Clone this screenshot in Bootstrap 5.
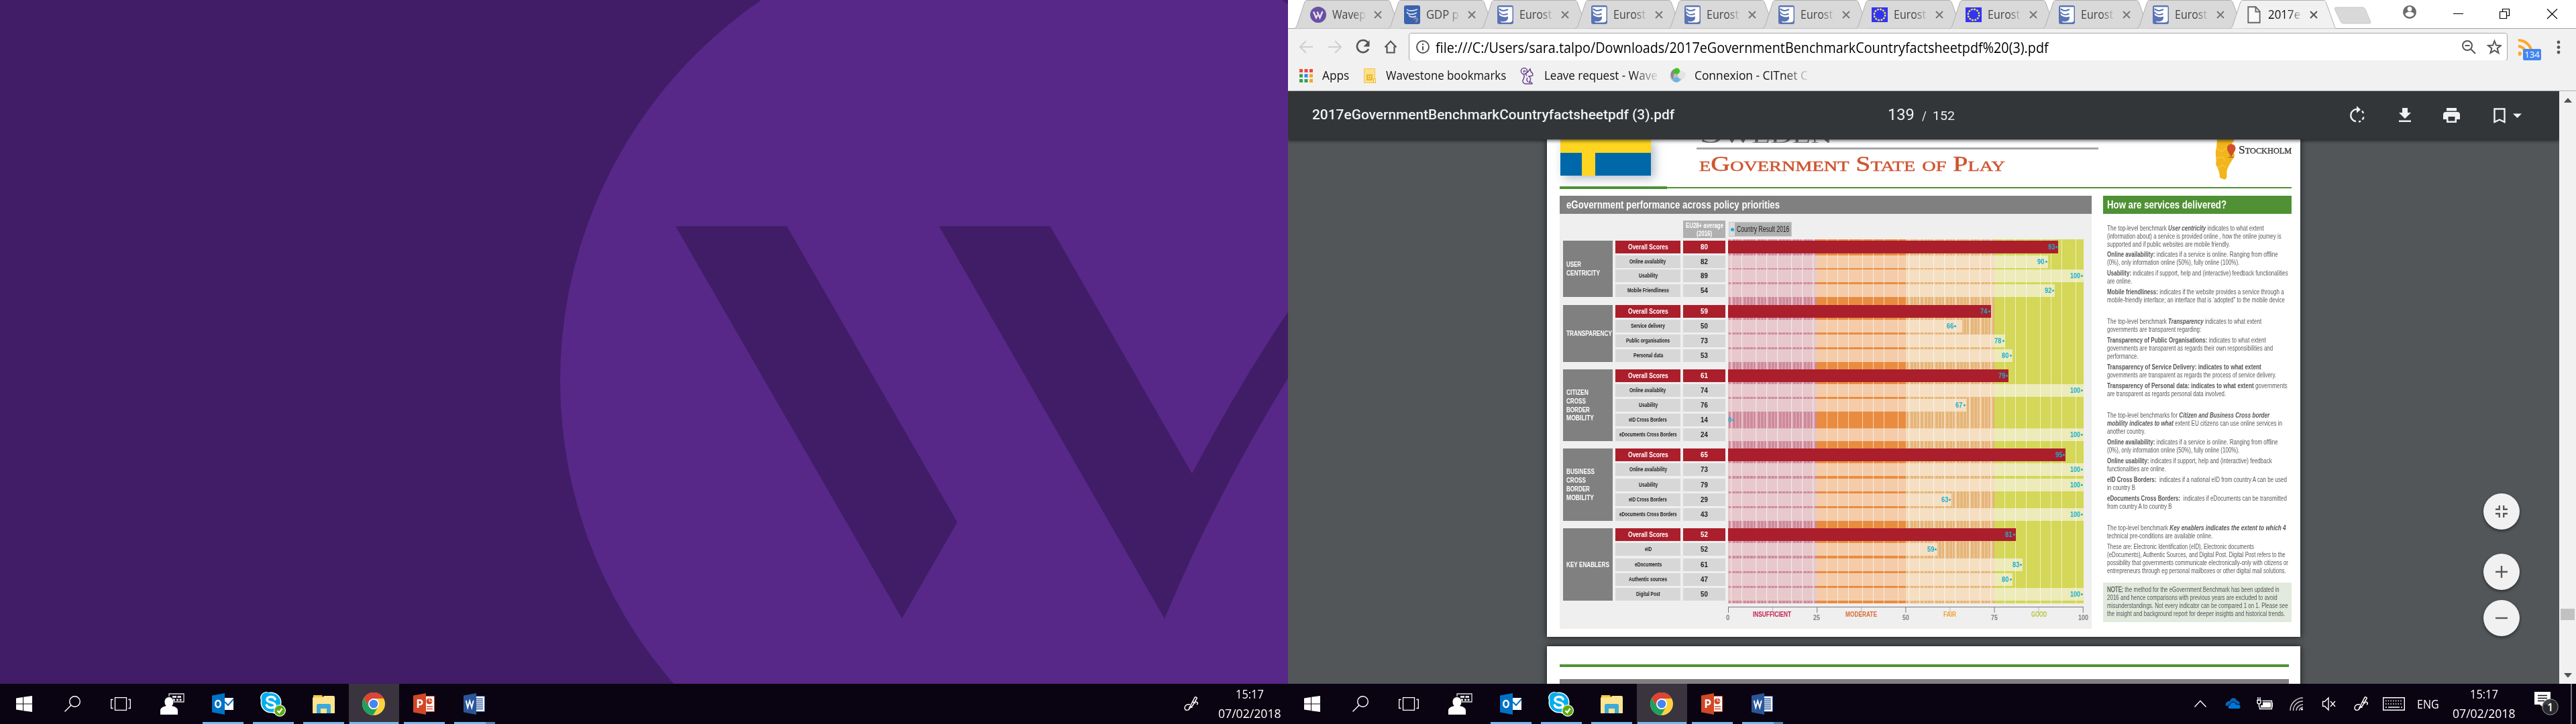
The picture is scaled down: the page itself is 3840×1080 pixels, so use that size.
<!DOCTYPE html>
<html lang="en">
<head>
<meta charset="utf-8">
<title>Desktop</title>
<link href="https://cdn.jsdelivr.net/npm/bootstrap@5.3.0/dist/css/bootstrap.min.css" rel="stylesheet">
<style>
body{width:3840px;height:1080px;overflow:hidden;font-family:"Open Sans","Noto Sans",sans-serif;background:#401d66}
svg{display:block;flex:none}
.screen{width:1920px;height:1080px;flex:none}
.fit{display:block;white-space:nowrap;flex:none}
.fit>span{display:inline-block;transform-origin:0 50%}
/* taskbar */
.taskbar{height:60px;flex:none;background:#0a0412;color:#fff}
.taskbar .tb{width:75px;height:60px;flex:none}
.taskbar .tb-s{width:72px}
.tb.run::after{content:"";position:absolute;left:7px;right:7px;bottom:0;height:3px;background:#76b9ed}
.tb.multi::after{background:linear-gradient(90deg,#76b9ed 47px,#5587ad 47px)}
.tb.on{background:#3a343f}
.tb.on::after{left:1px;right:1px}
.tray{width:48px;height:60px;flex:none}
.clock{width:114px;font-size:18px;line-height:29px}
.notif{width:72px}
/* browser */
.tabs{height:43px;background:#fff;border-bottom:1px solid #a4a4a4;padding-left:9px;flex:none}
.tab-i{width:139.55px;height:43px;flex:none;padding-left:24px}
.tab-bg{position:absolute;left:0;top:0;z-index:0}
.tab-i>*:not(.tab-bg){position:relative;z-index:1}
.tab-t{width:56px;margin-left:9px;font-size:19px;color:#444;overflow:hidden;-webkit-mask-image:linear-gradient(90deg,#000 55%,rgba(0,0,0,.1) 88%)}
.tab-i.active-tab{z-index:3}
.active-tab .tab-t{color:#111}
.omni{height:47px;background:#f1f1f1;flex:none;padding:6px 0 0 0}
.urlbox{width:1638px;height:42px;border:1px solid #a9a9a9;border-radius:4px;background:#fff;color:#000;font-size:22px}
.bm{height:46px;background:#f1f1f1;border-bottom:1px solid #b0b0b0;font-size:19px;color:#111;flex:none}
.fade-e{-webkit-mask-image:linear-gradient(90deg,#000 78%,rgba(0,0,0,.15) 99%)}
.count{left:7px;top:16px;width:27px;height:17px;background:#4285f4;color:#fff;font-size:13px;border-radius:2px;line-height:17px}
.pdfbar{height:72px;background:#323639;color:#f1f1f1;font-family:Roboto,sans-serif;width:1895px;box-shadow:0 2px 5px rgba(0,0,0,.6);z-index:5}
.viewer{width:1895px;background:#525659;padding-left:386px}
.scroll{width:25px;background:#f1f1f1}
.thumb{width:21px;height:17px;background:#c1c1c1}
.fab{width:54px;height:54px;border-radius:50%;background:#f1f1f1;box-shadow:0 2px 4px rgba(0,0,0,.5)}
.fabs{left:1782px;top:528px;width:54px}
/* document */
.sheet{width:1123px;background:#fff;box-shadow:0 0 9px rgba(0,0,0,.75);flex:none}
.serif{font-family:"Liberation Serif",serif;font-variant:small-caps}
.doc{font-family:"Liberation Sans Narrow","Liberation Sans",sans-serif}
.flag{width:135px;height:54px;background:linear-gradient(90deg,transparent 32px,#fed520 32px 52px,transparent 52px),linear-gradient(#fed520 20px,#0068a9 20px);box-shadow:5px 4px 14px rgba(110,130,150,.55)}
.greenrule{height:4px;background:linear-gradient(90deg,#4f9134 160px,transparent 160px),linear-gradient(transparent 1px,#4f9134 1px 3px,transparent 3px);width:1091px}
.ttl{height:27px;font-size:16.5px;font-weight:700;color:#fff;line-height:27px}
.panel-l{width:793px}
.panel-r{width:281px;margin-left:17px}
.perf{height:619px;background:#efefef;padding:10px 0 0 5px}
.eu{width:63px;height:26px;background:#b0b0b0;color:#fff;font-size:10.5px;line-height:12px;font-weight:700;padding-top:1px}
.leg{width:94px;height:22px;background:#b0b0b0;border:1px solid #c8c8c8;font-size:12px;color:#222;line-height:20px}
.leg-d{width:8px;height:20px;background:#dcdcdc}
.dot{width:5px;height:5px;border-radius:50%;background:#1aa9dc}
.cat{width:74px;background:#808080;color:#fff;font-weight:700;font-size:11.5px;line-height:12.8px;padding-left:4.5px}
.lab{width:97px;margin-left:4px}
.val{width:63px;margin-left:4px}
.cell{height:19px;background:#d7d7d7;color:#222;font-weight:700;line-height:19px;flex:none}
.lab .cell{font-size:9.2px}
.val .cell{font-size:11.5px}
.cell.red-c{background:#ab1f2c;color:#fff;font-size:11.5px!important}
.plot{width:530px;height:543px;margin-left:3.5px;padding-top:2px;
 background:
 linear-gradient(90deg,transparent 4.3px,rgba(255,255,255,.62) 4.3px 5.5px,transparent 5.5px 20.3px,rgba(255,255,255,.62) 20.3px 21.5px,transparent 21.5px 41.3px,rgba(255,255,255,.62) 41.3px 42.5px,transparent 42.5px) 0 0/53px 100%,
 repeating-linear-gradient(90deg,rgba(255,255,255,.36) 0 1.3px,transparent 1.3px 5.3px) 0 0/132.5px 100% no-repeat,
 repeating-linear-gradient(90deg,rgba(255,255,255,.36) 0 1.3px,transparent 1.3px 5.3px) 265px 0/132.5px 100% no-repeat,
 linear-gradient(90deg,#cf8b9a 25%,#e98c40 25% 50%,#e6b578 50% 75%,#d4d757 75%)}
.bar-l{height:19px;flex:none;color:#1aafcf;font-weight:700;font-size:11.5px;line-height:19px;
 background:
 linear-gradient(90deg,transparent 4.3px,rgba(255,255,255,.6) 4.3px 5.5px,transparent 5.5px 20.3px,rgba(255,255,255,.6) 20.3px 21.5px,transparent 21.5px 41.3px,rgba(255,255,255,.6) 41.3px 42.5px,transparent 42.5px) 0 0/53px 100%,
 linear-gradient(90deg,#e7c9cc 25%,#f5cca9 25% 50%,#f5dfc2 50% 75%,#ecebb9 75%) 0 0/530px 100%}
.bar-l.red-b{background:#ab1f2c}
.bar-l .dot{width:3px;height:3px;background:#1aafcf}
.axis{width:530px;height:9px;margin:5px 0 0 245.5px;border-top:1.5px solid #777;background:
 linear-gradient(90deg,#777 1.3px,transparent 1.3px) 0 0/132.2px 100%,
 linear-gradient(90deg,#bbb 1.3px,transparent 1.3px) 66px 0/132.2px 4px}
.zones{margin-left:245.5px;width:530px;font-size:11.5px;font-weight:700;line-height:12px;margin-top:-4px}
.ticks{margin-left:245.5px;width:530px;height:12px;font-size:11.5px;font-weight:700;color:#808080;line-height:12px;margin-top:-7px}
.ticks>div{width:0}
.prose{font-size:10.8px;line-height:12px;color:#5a5a5a;padding-left:6px}
.prose p{margin:0 0 4px}
.prose p.sec{margin-bottom:20px}
.prose b{color:#555}
.memo{height:59px;background:#e2eade;padding:4px 0 0 6px;font-size:10.8px;line-height:12px;color:#555;margin-top:12px}
.memo b{font-weight:400;-webkit-text-stroke:.3px}
</style>
<script src="https://cdn.jsdelivr.net/npm/bootstrap@5.3.0/dist/js/bootstrap.bundle.min.js"></script>
</head>
<body class="d-flex m-0">

<svg width="0" height="0" class="position-absolute">
<defs>
<symbol id="i-win" viewBox="0 0 24 24"><path fill="#fff" d="M0 3.4 10 2v9.5H0zM11 1.8 24 0v11.5H11zM0 12.5h10V22L0 20.6zM11 12.5h13V24l-13-1.8z"/></symbol>
<symbol id="i-search" viewBox="0 0 24 24"><g fill="none" stroke="#fff" stroke-width="1.4"><circle cx="15.5" cy="8.5" r="7.8"/><path d="M10 14 .5 23.5"/></g></symbol>
<symbol id="i-task" viewBox="0 0 30 20"><path fill="none" stroke="#fff" stroke-width="1.3" d="M6.500.7h17v18.600h-17zM3.500 3.500H.7v13h2.800M26.500 3.500h2.800v13h-2.800"/></symbol>
<symbol id="i-people" viewBox="0 0 36 32"><path fill="none" stroke="#ddd" stroke-width="1.3" d="M13 5V1h22v12H20"/><path fill="#ddd" d="M18 4h6v3h-6zM25.500 4H31v3h-5.500zM24 8.500h3v3h-3zM28.500 8.500h3v3h-3zM19 8.500h3v3h-3z"/><path fill="#fff" d="M13 6c4 0 6.500 3 6.500 7 0 3-1 5-2.500 6 5 1 9 3 9 7v6H0v-6c0-4 4-6 9-7-1.500-1-2.500-3-2.500-6 0-4 2.500-7 6.500-7z"/></symbol>
<symbol id="i-outlook" viewBox="0 0 32 32"><path fill="#fff" d="M18 7h14v18H18z"/><path fill="none" stroke="#0072c6" stroke-width="2" d="m19 13 5 5 8-9"/><path fill="#0072c6" d="M0 3.500 19 0v32L0 28.500z"/><ellipse cx="9" cy="16" rx="3.800" ry="5" fill="none" stroke="#fff" stroke-width="2.600"/></symbol>
<symbol id="i-skype" viewBox="0 0 38 38"><circle cx="9" cy="10" r="9" fill="#fff"/><circle cx="23" cy="25" r="9" fill="#fff"/><circle cx="16" cy="17" r="15.500" fill="#fff"/><circle cx="9.500" cy="10" r="8" fill="#00aff0"/><circle cx="23" cy="24" r="8" fill="#00aff0"/><circle cx="16" cy="17" r="14" fill="#00aff0"/><path fill="none" stroke="#fff" stroke-width="3.600" stroke-linecap="round" d="M22 12c-2-5-12-4.500-12 .5 0 5.500 12 3 12 8.500 0 5-11 5-12.500 0"/><circle cx="29" cy="29" r="9" fill="#fff"/><circle cx="29" cy="29" r="7.800" fill="#5fab10"/><path fill="none" stroke="#fff" stroke-width="2.200" d="m25.500 29 2.700 3 4.300-6"/></symbol>
<symbol id="i-folder" viewBox="0 0 33 27"><path fill="#f6c945" d="M1 0h13l2 4H1z"/><path fill="#ffe48f" d="M0 3.500h15L17 1h14c1 0 2 1 2 2v24H0z"/><path fill="#3fa9dc" d="M6 27V15c0-1 1-2 2-2h17c1 0 2 1 2 2v12h-6v-7H12v7z"/></symbol>
<symbol id="i-chrome" viewBox="0 0 34 34"><circle cx="17" cy="17" r="17" fill="#fdd23e"/><path fill="#db4437" d="M17 17 2.300 8.500A17 17 0 0 1 32 9H17z"/><path fill="#db4437" d="M2.300 8.500 10 21l7-12h15A17 17 0 0 0 2.300 8.500z"/><path fill="#1da160" d="M2.300 8.500A17 17 0 0 0 16 34l8-13a8 8 0 0 1-14 0z"/><circle cx="17" cy="17" r="8" fill="#fff"/><circle cx="17" cy="17" r="6.300" fill="#4486f4"/></symbol>
<symbol id="i-ppt" viewBox="0 0 32 32"><path fill="#fff" stroke="#d24726" d="M18 4.500h13.500v23H18z"/><circle cx="24" cy="12" r="4.500" fill="#d24726"/><path d="M24 12V7.500M24 12h4.500" stroke="#fff"/><path stroke="#d24726" stroke-width="1.600" d="M20 20h9M20 23.500h9"/><path fill="#d24726" d="M0 3.500 19 0v32L0 28.500z"/><path fill="none" stroke="#fff" stroke-width="2.600" d="M7 22V10.500h3a3 3 0 0 1 0 6.500H7"/></symbol>
<symbol id="i-word" viewBox="0 0 32 32"><path fill="#fff" stroke="#2a5699" d="M18 4.500h13.500v23H18z"/><path stroke="#2a5699" stroke-width="1.500" d="M19 8.500h10M19 11.500h10M19 14.500h10M19 17.500h10M19 20.500h10M19 23.500h10"/><path fill="#2a5699" d="M0 3.500 19 0v32L0 28.500z"/><path fill="none" stroke="#fff" stroke-width="1.900" d="m3.800 11 2.400 10.500L9.200 11.500l3 10L14.800 11"/></symbol>
<symbol id="i-pen" viewBox="0 0 22 22"><g fill="none" stroke="#fff" stroke-width="1.500"><path d="m10 13 6-11.500c1-1.500 4 0 3 1.500L12.500 14 9 17zM13 8l4 2"/><path d="M9 12c-4-1-8 1-8 5 0 5 7 4 7 0 0-3 4-2 4 0M17 8c4 0 4 3 2 4"/></g></symbol>
<symbol id="i-doc" viewBox="0 0 16 21"><path fill="#f9f9f9" stroke="#666" stroke-width="1.500" d="M1 1h9l5 5.500V20H1z"/><path fill="none" stroke="#666" stroke-width="1.500" d="M10 1v6h5"/></symbol>
<symbol id="i-w" viewBox="0 0 24 24"><circle cx="12" cy="12" r="12" fill="#6b4fa3"/><path fill="none" stroke="#e9e2f2" stroke-width="2.400" d="m5 7.500 4 9 2-4M10.500 7.500l4 9 4-9.500"/></symbol>
<symbol id="i-es" viewBox="0 0 24 28"><rect width="24" height="28" rx="3" fill="#5a74b4"/><path fill="#fff" d="M2 2.500h20.500V22c0 2.500-2 3.500-5 3.500H8c-3 0-3-2-3-2 3 1 7 1 9-1 2-1 2-4 2-6-4 2-9 1-13-2z"/><path fill="none" stroke="#5a74b4" stroke-width="2" d="M3 5c3 3.500 8 3.500 13 1M2.500 10c3 4 8 5 13 2.500M3 16c3 4 7 4.500 12 2.500"/></symbol>
<symbol id="i-gdp" viewBox="0 0 24 28"><rect width="24" height="28" rx="3" fill="#3c62ae"/><path fill="none" stroke="#dfe7f5" stroke-width="1.700" d="M4 6c3 3 8 3 16 0M4 10c3 4.500 8 4.500 15 1M7 15c3 3 7 3 11 1"/><path fill="none" stroke="#8c94a8" stroke-width="2" d="M15 21c1-3 6-2 5 1l-2 2v1.500"/></symbol>
<symbol id="i-eu" viewBox="0 0 24 22"><rect width="24" height="22" fill="#3333f5"/><circle cx="12" cy="11" r="8.200" fill="none" stroke="#f5f13a" stroke-width="2.400" stroke-dasharray="2.700 1.593"/></symbol>
</defs>
</svg>

<!-- left monitor -->
<div class="screen d-flex flex-column">
  <svg width="1920" height="1020" viewBox="0 0 1920 1020">
    <rect width="1920" height="1020" fill="#401d66"/>
    <circle cx="1523" cy="568" r="688" fill="#572888"/>
    <path fill="#401d66" d="M1007 337.500h166L1427 779l-82.500 143.500zM1400 337.500h165.500L1777 706.500Q1846 575 1920 465v99Q1812 740 1736 923z"/>
  </svg>
  <div class="taskbar d-flex" data-bar="left"></div>
</div>

<!-- right monitor -->
<div class="screen d-flex flex-column">
  <div class="tabs d-flex position-relative">
    <div id="tabs" class="d-flex flex-none"></div>
    <svg width="360" height="42" viewBox="0 0 360 42" style="margin-left:7px">
      <path fill="#d9d9d9" stroke="#c8c8c8" d="M11 11h39c3 0 4 1 5 3l8 19c0 2-1 2-3 2H23c-3 0-4-1-5-3L9.500 14c-.5-2 0-3 1.500-3z"/>
      <circle cx="121" cy="18" r="10" fill="#6b6b6b"/><circle cx="121" cy="13.500" r="3.400" fill="#fff"/><path fill="#fff" d="M114.500 21.500c0-5 13-5 13 0-2.500 5-10.500 5-13 0z"/>
      <path fill="none" stroke="#000" stroke-width="1.200" d="M186 20.500h15M255.500 17.500h10v10h-10zM259.500 17v-3.500h10v10H266M326 13.500l15 14.500M341 13.500 326 28"/>
    </svg>
  </div>
  <div class="omni d-flex">
    <svg width="180" height="41" viewBox="0 0 180 41">
      <g fill="none" stroke="#cfcfcf" stroke-width="2"><path d="M37 21H18M27 12l-9 9 9 9M60 21h19M70 12l9 9-9 9"/></g>
      <path fill="none" stroke="#555" stroke-width="2.600" d="M119 14.500A9 9 0 1 0 120 24"/><path fill="#555" d="M121.500 11v9.500h-9z"/>
      <path fill="none" stroke="#555" stroke-width="2.200" d="m144.500 21.500 8.500-9 8.500 9M147.500 20v9.500h11V20"/>
    </svg>
    <div class="urlbox d-flex align-items-center">
      <svg width="39" height="24" viewBox="0 0 39 24"><circle cx="20" cy="12" r="9" fill="none" stroke="#555" stroke-width="2"/><path stroke="#555" stroke-width="2.200" d="M20 11v6M20 7v2.200"/></svg>
      <div class="fit" data-w="914"><span>file:///C:/Users/sara.talpo/Downloads/2017eGovernmentBenchmarkCountryfactsheetpdf%20(3).pdf</span></div>
      <svg class="ms-auto me-2" width="62" height="26" viewBox="0 0 62 26"><g fill="none" stroke="#555" stroke-width="2"><circle cx="11" cy="11" r="7"/><path d="m16 16 7 7M7.500 11h7"/><path d="m51.500 4 2.500 6.500 7 .4-5.400 4.300 1.900 6.800-6-3.800-6 3.800 1.900-6.800L42 10.900l7-.4z"/></g></svg>
    </div>
    <div class="position-relative ms-3 mt-2" style="width:60px">
      <svg width="66" height="26" viewBox="0 0 66 26"><g fill="none" stroke="#ffa726" stroke-width="4"><path d="M0 3c11 0 20 9 20 20M0 12c6 0 11 5 11 11"/></g><circle cx="2" cy="23" r="3" fill="#ffa726"/><g fill="#555"><circle cx="60" cy="6" r="2.400"/><circle cx="60" cy="13.500" r="2.400"/><circle cx="60" cy="21" r="2.400"/></g></svg>
      <div class="count position-absolute text-center">134</div>
    </div>
  </div>
  <div class="bm d-flex align-items-center">
    <svg width="51" height="22" viewBox="0 0 51 22"><path fill="#f2453d" d="M17 1h5v5h-5zM24.500 1h5v5h-5zM32 1h5v5h-5z"/><path fill="#34a050" d="M17 8.500h5v5h-5zM17 16h5v5h-5zM24.500 16h5v5h-5z"/><path fill="#2b84f3" d="M24.500 8.500h5v5h-5z"/><path fill="#f5a623" d="M32 8.500h5v5h-5zM32 16h5v5h-5z"/></svg>
    <div class="fit" data-w="40"><span>Apps</span></div>
    <svg width="55" height="24" viewBox="0 0 55 24"><path fill="#ffe08a" stroke="#f0c64a" d="M22.500 1.500h16v21h-16z"/><path fill="#e6b832" d="M26 10h9v9h-9z"/><path fill="#ffe08a" d="M28 12h2v2h-2zM31 12h2v2h-2zM28 15.500h2v1.500h-2zM31 15.500h2v1.500h-2z"/><path fill="#fff0b8" stroke="#e6b832" d="M36.500 16.500h3v6h-3z"/></svg>
    <div class="fit" data-w="179"><span>Wavestone bookmarks</span></div>
    <svg width="57" height="26" viewBox="0 0 57 26"><g fill="none" stroke="#6b4691" stroke-width="1.500"><circle cx="27" cy="6" r="4.600"/><path d="M29 7c-1-3-4-1-2 1M26 11c4 4-2 7-1 11 1 2 2 3 4 3h10c0-2-2-3-5-2 4-4 3-7 0-9l5-1c2-2 0-5-2-6l-1-4-4 5c-3 0-3 3-1 5M32 16c-2 3-1 5 1 6"/></g></svg>
    <div class="fit fade-e" data-w="169"><span>Leave request - Wave</span></div>
    <svg width="55" height="26" viewBox="0 0 55 26"><circle cx="28" cy="13" r="9.500" fill="#b9bec0"/><circle cx="36" cy="12" r="6" fill="#e3e5e5"/><path fill="#888" d="M20 8c2-5 6-6 9-5l-5 8-1 8c-3-3-4-7-3-11z"/><circle cx="28.500" cy="6" r="4.500" fill="#3ec41e"/><ellipse cx="28" cy="19" rx="5" ry="3.800" fill="#6bb4e4"/></svg>
    <div class="fit fade-e" data-w="169"><span>Connexion - CITnet C</span></div>
  </div>

  <div class="d-flex flex-fill overflow-hidden position-relative">
    <div class="d-flex flex-column position-relative overflow-hidden">
      <div class="pdfbar d-flex align-items-center position-relative flex-shrink-0" style="padding-left:36px">
        <div class="fit fw-medium" style="font-size:21px" data-w="540"><span>2017eGovernmentBenchmarkCountryfactsheetpdf (3).pdf</span></div>
        <div class="d-flex align-items-baseline" style="margin-left:318px">
          <div class="fit" style="font-size:23px" data-w="40"><span>139</span></div>
          <div class="fit" style="font-size:19px;margin-left:11px" data-w="7"><span>/</span></div>
          <div class="fit" style="font-size:19px;margin-left:9px" data-w="33"><span>152</span></div>
        </div>
        <svg class="ms-auto" width="324" height="40" viewBox="0 0 324 40">
          <g fill="none" stroke="#f1f1f1" stroke-width="2.400"><path d="M24 11a9 9 0 0 0-3 18.300M25 29.600a9 9 0 0 0 3-1M30.500 26.500a9 9 0 0 0 2-4M32 17a9 9 0 0 0-2-3.500"/></g><path fill="#f1f1f1" d="m22 6 6 5.500-6 5z"/>
          <path fill="#f1f1f1" d="M90 9h8v7h5l-9 9-9-9h5zM85 27.500h18V30H85zM156 9h15v4.500h-15zM155 15h17c3 0 4 2 4 4v7h-5v5h-15v-5h-5v-7c0-2 1-4 4-4z"/><path fill="#323639" d="M158.500 22h10v6.500h-10z"/>
          <path fill="none" stroke="#f1f1f1" stroke-width="2.400" d="M227.500 10.500h15V30l-7.500-3.500-7.500 3.500z"/><path fill="#f1f1f1" d="M255 17.500h13l-6.500 6.500z"/>
        </svg>
      </div>
      <div class="viewer flex-fill d-flex flex-column">
        <div class="sheet doc" style="height:742px">
          <div class="d-flex" style="height:70px;padding-left:20px">
            <div class="flag"></div>
            <div style="margin-left:68px;width:599px">
              <div class="serif d-flex align-items-end" style="height:7px;color:#777;font-size:40px;line-height:30px;padding-left:4px"><div class="fit" data-w="198"><span>Sweden</span></div></div>
              <div style="height:3px;margin-top:5px;background:#a5a7aa"></div>
              <div class="serif" style="color:#cf5530;font-size:31px;line-height:38px;padding:3px 0 0 4px;-webkit-text-stroke:.5px"><div class="fit" data-w="456"><span>eGovernment State of Play</span></div></div>
            </div>
            <svg width="115" height="62" viewBox="0 0 115 62" style="margin-left:172px">
              <path fill="#f2b61c" d="M5 0h26c-4 7-7 11-8 15 6 3 10 8 7 12-5 7-8 12-10 18-2 7 2 12-4 15l-7-3c0-8-3-14-6-20 2-8-2-16 1-24z"/>
              <path fill="none" stroke="#f7cf62" d="m5 14 8 4 5-6M4 28l9-2 4 6M6 42l8-4 4 4"/>
              <path fill="#d1502a" d="M26 26c-4-6-6-9-6-13 0-8 12.500-8 12.500 0 0 4-3 7-6.500 13z"/><path stroke="#8a5a14" d="M22 26.500h8"/>
            </svg>
            <div class="serif" style="margin-left:-78px;margin-top:5px;font-size:17px;line-height:22px;color:#333;-webkit-text-stroke:.3px"><div class="fit" data-w="79"><span>Stockholm</span></div></div>
          </div>
          <div class="greenrule" style="margin-left:19px"></div>
          <div class="d-flex" style="margin:10px 0 0 19px">
            <div class="panel-l">
              <div class="ttl" style="background:#808080;padding-left:10px"><div class="fit" data-w="318"><span>eGovernment performance across policy priorities</span></div></div>
              <div class="perf">
                <div class="d-flex align-items-start">
                  <div class="eu" style="margin-left:179px"><div class="fit mx-auto" data-w="56"><span>EU28+ average</span></div><div class="fit mx-auto" data-w="23"><span>(2016)</span></div></div>
                  <div class="leg d-flex" style="margin:2px 0 0 5px"><div class="leg-d d-flex align-items-center justify-content-center"><div class="dot"></div></div><div class="fit" style="margin-left:3px" data-w="78"><span>Country Result 2016</span></div></div>
                </div>
                <div class="d-flex" style="margin-top:2px">
                  <div id="groups" style="padding-top:2px"></div>
                  <div id="plot" class="plot"></div>
                </div>
                <div class="axis"></div>
                <div class="zones d-flex">
                  <div class="w-25" style="color:#c4224e"><div class="fit mx-auto" data-w="57"><span>INSUFFICIENT</span></div></div>
                  <div class="w-25" style="color:#db6b35"><div class="fit mx-auto" data-w="47"><span>MODERATE</span></div></div>
                  <div class="w-25" style="color:#f2a330"><div class="fit mx-auto" data-w="19"><span>FAIR</span></div></div>
                  <div class="w-25" style="color:#b9c63a"><div class="fit mx-auto" data-w="23"><span>GOOD</span></div></div>
                </div>
                <div class="ticks d-flex justify-content-between">
                  <div class="d-flex justify-content-center"><div class="fit" data-w="5"><span>0</span></div></div>
                  <div class="d-flex justify-content-center"><div class="fit" data-w="10"><span>25</span></div></div>
                  <div class="d-flex justify-content-center"><div class="fit" data-w="10"><span>50</span></div></div>
                  <div class="d-flex justify-content-center"><div class="fit" data-w="10"><span>75</span></div></div>
                  <div class="d-flex justify-content-center"><div class="fit" data-w="15"><span>100</span></div></div>
                </div>
              </div>
            </div>
            <div class="panel-r">
              <div class="ttl" style="background:#4f9134;padding-left:6px"><div class="fit" data-w="178"><span>How are services delivered?</span></div></div>
              <div class="prose" style="padding-top:15px">
                <p style="margin-bottom:3px"><span class="fit" data-w="234"><span>The top-level benchmark <b><i>User centricity</i></b> indicates to what extent</span></span><span class="fit" data-w="260"><span>(information about) a service is provided online , how the online journey is</span></span><span class="fit" data-w="183"><span>supported and if public websites are mobile friendly.</span></span></p>
                <p><span class="fit" data-w="255"><span><b>Online availability:</b> indicates if a service is online. Ranging from offline</span></span><span class="fit" data-w="197"><span>(0%), only information online (50%), fully online (100%).</span></span></p>
                <p><span class="fit" data-w="270"><span><b>Usability:</b> indicates if support, help and (interactive) feedback functionalities</span></span><span class="fit" data-w="37"><span>are online.</span></span></p>
                <p class="sec"><span class="fit" data-w="264"><span><b>Mobile friendliness:</b> indicates if the website provides a service through a</span></span><span class="fit" data-w="265"><span>mobile-friendly interface; an interface that is ‘adopted” to the mobile device</span></span></p>
                <p><span class="fit" data-w="230"><span>The top-level benchmark <b><i>Transparency</i></b> indicates to what extent</span></span><span class="fit" data-w="140"><span>governments are transparent regarding:</span></span></p>
                <p><span class="fit" data-w="237"><span><b>Transparency of Public Organisations:</b> indicates to what extent</span></span><span class="fit" data-w="247"><span>governments are transparent as regards their own responsibilities and</span></span><span class="fit" data-w="47"><span>performance.</span></span></p>
                <p><span class="fit" data-w="230"><span><b>Transparency of Service Delivery: indicates to what extent</b></span></span><span class="fit" data-w="252"><span>governments are transparent as regards the process of service delivery.</span></span></p>
                <p class="sec"><span class="fit" data-w="269"><span><b>Transparency of Personal data: indicates to what extent</b> governments</span></span><span class="fit" data-w="177"><span>are transparent as regards personal data involved.</span></span></p>
                <p><span class="fit" data-w="242"><span>The top-level benchmarks for <b><i>Citizen and Business Cross border</i></b></span></span><span class="fit" data-w="261"><span><b><i>mobility indicates to what</i></b> extent EU citizens can use online services in</span></span><span class="fit" data-w="57"><span>another country.</span></span></p>
                <p><span class="fit" data-w="255"><span><b>Online availability:</b> indicates if a service is online. Ranging from offline</span></span><span class="fit" data-w="197"><span>(0%), only information online (50%), fully online (100%).</span></span></p>
                <p><span class="fit" data-w="246"><span><b>Online usability:</b> indicates if support, help and (interactive) feedback</span></span><span class="fit" data-w="88"><span>functionalities are online.</span></span></p>
                <p><span class="fit" data-w="268"><span><b>eID Cross Borders:</b>&nbsp; indicates if a national eID from country A can be used</span></span><span class="fit" data-w="42"><span>in country B</span></span></p>
                <p class="sec"><span class="fit" data-w="268"><span><b>eDocuments Cross Borders:</b>&nbsp; indicates if eDocuments can be transmitted</span></span><span class="fit" data-w="97"><span>from country A to country B</span></span></p>
                <p><span class="fit" data-w="267"><span>The top-level benchmark <b><i>Key enablers indicates the extent to which 4</i></b></span></span><span class="fit" data-w="157"><span>technical pre-conditions are available online.</span></span></p>
                <p><span class="fit" data-w="219"><span>These are: Electronic Identification (eID), Electronic documents</span></span><span class="fit" data-w="266"><span>(eDocuments), Authentic Sources, and Digital Post. Digital Post refers to the</span></span><span class="fit" data-w="270"><span>possibility that governments communicate electronically-only with citizens or</span></span><span class="fit" data-w="267"><span>entrepreneurs through eg personal mailboxes or other digital mail solutions.</span></span></p>
              </div>
              <div class="memo"><span class="fit" data-w="257"><span><b>NOTE:</b> the method for the eGovernment Benchmark has been updated in</span></span><span class="fit" data-w="254"><span>2016 and hence comparisons with previous years are excluded to avoid</span></span><span class="fit" data-w="270"><span>misunderstandings. Not every indicator can be compared 1 on 1. Please see</span></span><span class="fit" data-w="265"><span>the insight and background report for deeper insights and historical trends.</span></span></div>
            </div>
          </div>
        </div>
        <div class="sheet" style="height:100px;margin-top:14px;padding:27px 17px 0 19px">
          <div style="height:4px;background:#4f9134"></div>
          <div style="height:40px;margin-top:18px;background:#808080"></div>
        </div>
      </div>
    </div>
    <div class="fabs position-absolute" style="top:600px">
      <div class="fab d-flex align-items-center justify-content-center"><svg width="18" height="18" viewBox="0 0 18 18"><path fill="none" stroke="#5a5a5a" stroke-width="2.400" d="M0 5.800h5.800V0M12.200 0v5.800H18M0 12.200h5.800V18M18 12.200h-5.800V18"/></svg></div>
      <div class="fab d-flex align-items-center justify-content-center" style="margin-top:36px"><svg width="18" height="18" viewBox="0 0 18 18"><path stroke="#5a5a5a" stroke-width="2.400" d="M0 9h18M9 0v18"/></svg></div>
      <div class="fab d-flex align-items-center justify-content-center" style="margin-top:15px"><svg width="18" height="18" viewBox="0 0 18 18"><path stroke="#5a5a5a" stroke-width="2.400" d="M0 9h18"/></svg></div>
    </div>
    <div class="scroll d-flex flex-column align-items-center">
      <svg width="12" height="7" viewBox="0 0 12 7" style="margin-top:10px"><path fill="#505050" d="M0 7 6 0l6 7z"/></svg>
      <div class="thumb" style="margin-top:755px"></div>
      <svg width="12" height="7" viewBox="0 0 12 7" style="margin-top:79px"><path fill="#505050" d="M0 0h12L6 7z"/></svg>
    </div>
  </div>
  <div class="taskbar d-flex" data-bar="right"></div>
</div>

<script>
const use=(id,w,h,x='')=>`<svg width="${w}" height="${h}" ${x}><use href="#i-${id}"/></svg>`;
const mid='d-flex align-items-center justify-content-center position-relative';
const fit=(t,w,c='')=>`<div class="fit ${c}" data-w="${w}"><span>${t}</span></div>`;

// browser tabs
const tabs=[['w','Wavep',50],['gdp','GDP p',49],['es'],['es'],['es'],['es'],['eu'],['eu'],['es'],['es'],['doc','2017e',48]];
document.getElementById('tabs').innerHTML=tabs.map(([ic,t,w],i)=>{
  const a=i===10,h=ic==='eu'?22:ic==='doc'||ic==='w'?26:28;
  return `<div class="tab-i d-flex align-items-center position-relative ${a?'active-tab':''}">
  <svg class="tab-bg" width="160" height="43"><path d="M0 42.500C3 42 4 39 5 36L15.500 4C16.500 1.500 17.500.5 20 .5H139c2.500 0 3.500 1 4.500 3.500L155 36c1 4 2 6 4 6.500" fill="${a?'#f1f1f1':'#d9d9d9'}" stroke="#b0b0b0"/></svg>
  ${use(ic,24,h)}<div class="tab-t">${fit(t||'Eurost',w||48)}</div>
  <svg width="12" height="12" style="margin-left:6px"><path d="m1 1 10 10M11 1 1 11" stroke="${a?'#555':'#777'}" stroke-width="2"/></svg></div>`}).join('');

// performance chart
const data=[
 [84,0,[['USER',22],['CENTRICITY',50]],[['Overall Scores',60,80,93],['Online availablity',54.5,82,90],['Usability',28,89,100],['Mobile Friendliness',62,54,92]]],
 [85,12,[['TRANSPARENCY',68]],[['Overall Scores',60,59,74],['Service delivery',51,50,66],['Public organisations',65,73,78],['Personal data',44,53,80]]],
 [107,11,[['CITIZEN',33],['CROSS',29],['BORDER',35],['MOBILITY',41]],[['Overall Scores',60,61,79],['Online availablity',54.5,74,100],['Usability',28,76,67],['eID Cross Borders',57,14,0],['eDocuments Cross Borders',86,24,100]]],
 [108,11,[['BUSINESS',42],['CROSS',29],['BORDER',35],['MOBILITY',41]],[['Overall Scores',60,65,95],['Online availability',56,73,100],['Usability',28,79,100],['eID Cross Borders',57,29,63],['eDocuments Cross Borders',86,43,100]]],
 [108,11,[['KEY ENABLERS',64]],[['Overall Scores',60,52,81],['eID',10,52,59],['eDocuments',40,61,83],['Authentic sources',57,47,80],['Digital Post',36,50,100]]]];
const col='d-flex flex-column justify-content-between';
document.getElementById('groups').innerHTML=data.map(([h,m,cat,rows])=>`<div class="d-flex" style="height:${h}px;margin-top:${m}px">
 <div class="cat d-flex flex-column justify-content-center">${cat.map(c=>fit(...c)).join('')}</div>
 <div class="lab ${col}">${rows.map((r,i)=>`<div class="cell d-flex justify-content-center ${i?'':'red-c'}">${fit(r[0],r[1])}</div>`).join('')}</div>
 <div class="val ${col}">${rows.map((r,i)=>`<div class="cell d-flex justify-content-center ${i?'':'red-c'}">${fit(r[2],11)}</div>`).join('')}</div></div>`).join('');
document.getElementById('plot').innerHTML=data.map(([h,m,c,rows])=>`<div class="${col}" style="height:${h}px;margin-top:${m}px">${rows.map((r,i)=>{
 const start=r[3]===0, back=r[3]===66?9:1;
 return `<div class="bar-l d-flex align-items-center ${start?'justify-content-start':'justify-content-end'} ${i?'':'red-b'}" style="width:${r[3]*5.3}px">${fit(r[3],r[3]===100?15:start?5:10.5)}<div class="dot flex-shrink-0" style="margin:0 ${back}px 0 1px"></div></div>`}).join('')}</div>`).join('');

// taskbars
const apps=[['outlook',32,32,'run'],['skype',38,38,'run'],['folder',33,27,'run'],['chrome',34,34,'run on'],['ppt',32,32,'run'],['word',32,32,'run multi']];
const left=[['win',24,24],['search',24,24],['task',30,20]].map(a=>`<div class="tb tb-s ${mid}">${use(a[0],a[1],a[2])}</div>`).join('')
 +`<div class="tb ${mid}" style="margin-left:3.500px">${use('people',36,32)}</div>`
 +apps.map(a=>`<div class="tb ${mid} ${a[3]}">${use(a[0],a[1],a[2])}</div>`).join('');
const clock=`<div class="clock d-flex flex-column align-items-center justify-content-center">${fit('15:17',42)}${fit('07/02/2018',94)}</div>`;
const ic=(s,w=24,h=24)=>`<div class="tray ${mid}"><svg width="${w}" height="${h}" viewBox="0 0 ${w} ${h}" fill="none" stroke="#fff" stroke-width="1.4">${s}</svg></div>`;
const pen=`<div class="tray ${mid}">${use('pen',22,22)}</div>`;
document.querySelector('[data-bar=left]').innerHTML=left+`<div class="ms-auto d-flex">${pen}<div style="width:6px"></div>${clock}</div>`;
document.querySelector('[data-bar=right]').innerHTML=left+`<div class="ms-auto d-flex align-items-center">`
 +ic('<path d="m3.500 16.500 8.500-9 8.500 9"/>')
 +ic('<path stroke="none" fill="#0a64b4" d="M2 15C0 9 7 7 8 8c2-7 10-5 10-1 4 0 6 4 4 7z"/><path stroke="#0a0412" stroke-width="1" fill="#0078d7" d="M7 19.500c-3-1-2-6 1-6 1-6 9-5 9-1 5-1 7 2 7 4s-1 3-3 3z"/>')
 +ic('<path fill="#fff" stroke="none" d="M9 9.500h12v8H6V14h3z"/><path d="M8.500 7.500h14v12h-18v-3M22.500 11h1.500v5h-1.500M1 6.500h5v3a2.500 2.500 0 0 1-5 0zM2 6V2M5 6V2M3.500 12v5"/>')
 +ic('<g stroke="#ccc"><path d="M2 22C2 11 11 3 21 3M6.500 22C6.500 14 13 8 21 8M11 22c0-5 5-9 10-9M15.500 22c0-3 3-5 5.500-5"/></g><circle cx="19.500" cy="20" r="1.600" fill="#fff" stroke="none"/>')
 +ic('<path d="M2.500 8.500h3L11 3v18l-5.500-5.500h-3zM14 8l7 8M21 8l-7 8"/>')
 +pen
 +ic('<path d="M.7.700h31.600v18.600H.7z"/><path stroke-dasharray="1.500 2.200" d="M4 5.500h25M4 10h25"/><path stroke-dasharray="2 2 17 2" d="M4 15h25"/>',33,20)
 +`<div class="d-flex justify-content-center" style="width:54px;font-size:18px">${fit('ENG',33)}</div>${clock}`
 +`<div class="notif ${mid}"><svg width="36" height="36" viewBox="0 0 36 36" style="margin-top:-2px"><path fill="#fff" d="M0 1h24v19H14v5l-6-5H0z"/><path stroke="#0a0412" stroke-width="1.500" d="M5 6.500h14M5 10.500h14M5 14.500h10"/><circle cx="23.500" cy="23.500" r="11.800" fill="#2b2b2d" fill-opacity=".9" stroke="#999"/><text x="23.500" y="29.500" fill="#fff" font-size="16" font-weight="600" text-anchor="middle">1</text></svg></div>`
 +`<div style="width:1.500px;height:60px;background:#77737c"></div><div style="width:6.500px"></div></div>`;

// condense each text run to its column width
document.querySelectorAll('.fit').forEach(e=>{
  const s=e.firstElementChild,w=+e.dataset.w;
  const n=s.offsetWidth;
  e.style.width=w+'px';
  s.style.transform=`scaleX(${w/n})`;
  s.style.marginRight=(w-n)+'px';
});
</script>
</body>
</html>
